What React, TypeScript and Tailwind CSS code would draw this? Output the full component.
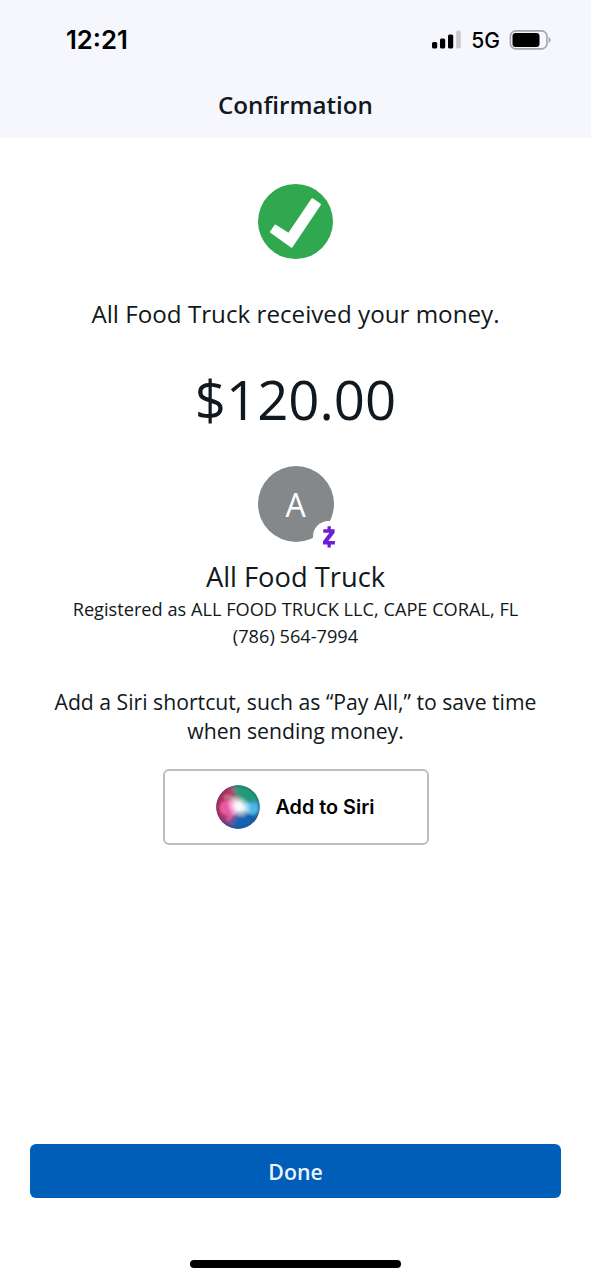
import type { ReactNode } from 'react'

const payment = {
  name: 'All Food Truck',
  amount: '$120.00',
  registered: 'Registered as ALL FOOD TRUCK LLC, CAPE CORAL, FL',
  phone: '(786) 564-7994',
}

function StatusBar() {
  return (
    <div className="flex h-20 items-center justify-between pl-[66px] pr-[39px] font-['Inter',sans-serif] text-black">
      <span className="text-[25.700px] font-semibold leading-none">12:21</span>
      <div className="flex items-center">
        <svg width="30" height="20" viewBox="0 0 30 20">
          <rect x="1" y="12" width="5.200" height="6.500" rx="1.500" />
          <rect x="9" y="8.500" width="5.200" height="10" rx="1.500" />
          <rect x="17" y="4.500" width="5.200" height="14" rx="1.500" />
          <rect x="25.200" y="0.500" width="4.600" height="18" rx="1.500" fill="#c9cacd" />
        </svg>
        <span className="ml-[10px] pt-px text-[21px] font-medium leading-none">5G</span>
        <svg className="ml-[9px]" width="43" height="20" viewBox="0 0 43 20">
          <rect x="1.400" y="0.900" width="36.600" height="18" rx="5.500" fill="none" stroke="#a3a4a8" strokeWidth="1.600" />
          <rect x="3.500" y="3" width="27" height="14" rx="3.200" />
          <path d="M39.600 7v6c1.300-.5 2-1.600 2-3s-.7-2.500-2-3z" fill="#a3a4a8" />
        </svg>
      </div>
    </div>
  )
}

function SuccessIcon() {
  return (
    <svg className="mt-[46px]" width="75" height="75" viewBox="0 0 75 75">
      <circle cx="37.500" cy="37.500" r="37.500" fill="#2fa84f" />
      <path
        d="M17.400 41.500L30.700 50 54.200 15.200 62 20.500 33.600 62.800 12.900 48z"
        fill="#fff"
        stroke="#fff"
        strokeWidth="2"
        strokeLinejoin="round"
      />
    </svg>
  )
}

function Avatar() {
  return (
    <div className="relative mt-[32px] size-[76px]">
      <div className="flex size-full items-center justify-center rounded-full bg-[#85888b]">
        <span className="pt-0.5 text-[32px] leading-none text-white">A</span>
      </div>
      {/* Zelle badge */}
      <svg className="absolute left-[55px] top-[55px]" width="31" height="31" viewBox="0 0 31 31">
        <circle cx="15.500" cy="15.500" r="15.500" fill="#fff" />
        <path
          d="M10.300 8.300H21.600V11.700L15.300 20H21.900V23.400H17.800V26.600H14.500V23.400H10V20.200L16.400 11.800H10.300zM14.500 5.200H17.800V9H14.500z"
          fill="#6b1fd1"
        />
      </svg>
    </div>
  )
}

function SiriOrb() {
  return (
    <svg width="44" height="44" viewBox="0 0 44 44">
      <defs>
        <clipPath id="orb">
          <circle cx="22" cy="22" r="21.700" />
        </clipPath>
        <radialGradient id="glow">
          <stop offset="0" stopColor="#fff" />
          <stop offset=".3" stopColor="#fff" stopOpacity=".9" />
          <stop offset="1" stopColor="#fff" stopOpacity="0" />
        </radialGradient>
        <radialGradient id="rim">
          <stop offset=".84" stopColor="#20365c" stopOpacity="0" />
          <stop offset="1" stopColor="#20365c" stopOpacity=".35" />
        </radialGradient>
        <filter id="soft" x="-50%" y="-50%" width="200%" height="200%">
          <feGaussianBlur stdDeviation="2.500" />
        </filter>
        <filter id="faint" x="-20%" y="-20%" width="140%" height="140%">
          <feGaussianBlur stdDeviation="1.200" />
        </filter>
      </defs>
      <g clipPath="url(#orb)">
        <rect width="44" height="44" fill="#4c6aa0" />
        <g filter="url(#soft)">
          <path d="M-4-4h18l8 22-8 28H-4z" fill="#b92d63" />
          <path d="M14-4h34v24L24 18z" fill="#219a79" />
          <path d="M24 20l24-4v14l-16 2z" fill="#3fa3c8" />
          <path d="M10 48l8-16 30-4v20z" fill="#1464b4" />
          <path d="M2 36l8-2 7 12H4z" fill="#63408f" />
        </g>
        <g filter="url(#faint)">
          <path d="M8 11Q17 5 25 21Q14 12 8 15z" fill="#b8b3ab" opacity=".5" />
          <ellipse cx="13" cy="23" rx="9.500" ry="8" fill="#ee62ae" opacity=".85" />
          <ellipse cx="34" cy="23.500" rx="8" ry="6" fill="#52b9ee" opacity=".9" />
          <path d="M25 25Q33 26 39 35Q29 33 25 25z" fill="#153c74" opacity=".55" />
          <path d="M9 34Q14 30 22 23Q20 31 12 37z" fill="#c9b4e0" opacity=".35" />
        </g>
        <ellipse cx="23" cy="21.500" rx="13.500" ry="11" fill="url(#glow)" transform="rotate(35 23 21.500)" />
        <circle cx="22" cy="22" r="22" fill="url(#rim)" />
      </g>
    </svg>
  )
}

function Line({ className, children }: { className: string; children: ReactNode }) {
  return <p className={`whitespace-nowrap text-center ${className}`}>{children}</p>
}

export default function App() {
  return (
    <div className="flex h-[1280px] w-full flex-col bg-white font-['Open_Sans',sans-serif] text-[#101820]">
      <header className="h-[138px] bg-[#f5f7fc]">
        <StatusBar />
        <h1 className="text-center text-[24.200px] font-semibold leading-[50px]">Confirmation</h1>
      </header>

      <main className="flex flex-1 flex-col items-center">
        <SuccessIcon />
        <Line className="mt-[39px] text-[24.200px] leading-8">{payment.name} received your money.</Line>
        <Line className="mt-[34px] text-[54.500px] leading-[70px]">{payment.amount}</Line>
        <Avatar />
        <Line className="mt-[17px] text-[27.300px] leading-9">{payment.name}</Line>
        <Line className="mt-px text-[18.200px] leading-[27px]">{payment.registered}</Line>
        <Line className="text-[18.200px] leading-[27px]">{payment.phone}</Line>
        <Line className="mt-[37px] text-[21.200px] leading-[29px]">
          Add a Siri shortcut, such as “Pay All,” to save time
          <br />
          when sending money.
        </Line>
        <button className="mt-[24px] flex h-[76px] w-[266px] items-center rounded-md border-2 border-[#bdbdbd] pl-[51px]">
          <SiriOrb />
          <span className="ml-[16px] whitespace-nowrap pt-0.5 font-['Inter',sans-serif] text-[19.800px] font-semibold text-black">
            Add to Siri
          </span>
        </button>
      </main>

      <footer className="flex flex-col items-center px-[30px] pb-[12px]">
        <button className="h-[54px] w-full rounded-md bg-[#005eb8] pt-0.5 text-[21.300px] font-semibold text-[#e9f5ff]">
          Done
        </button>
        <div className="mt-[62px] h-2 w-[211px] rounded-full bg-black" />
      </footer>
    </div>
  )
}
